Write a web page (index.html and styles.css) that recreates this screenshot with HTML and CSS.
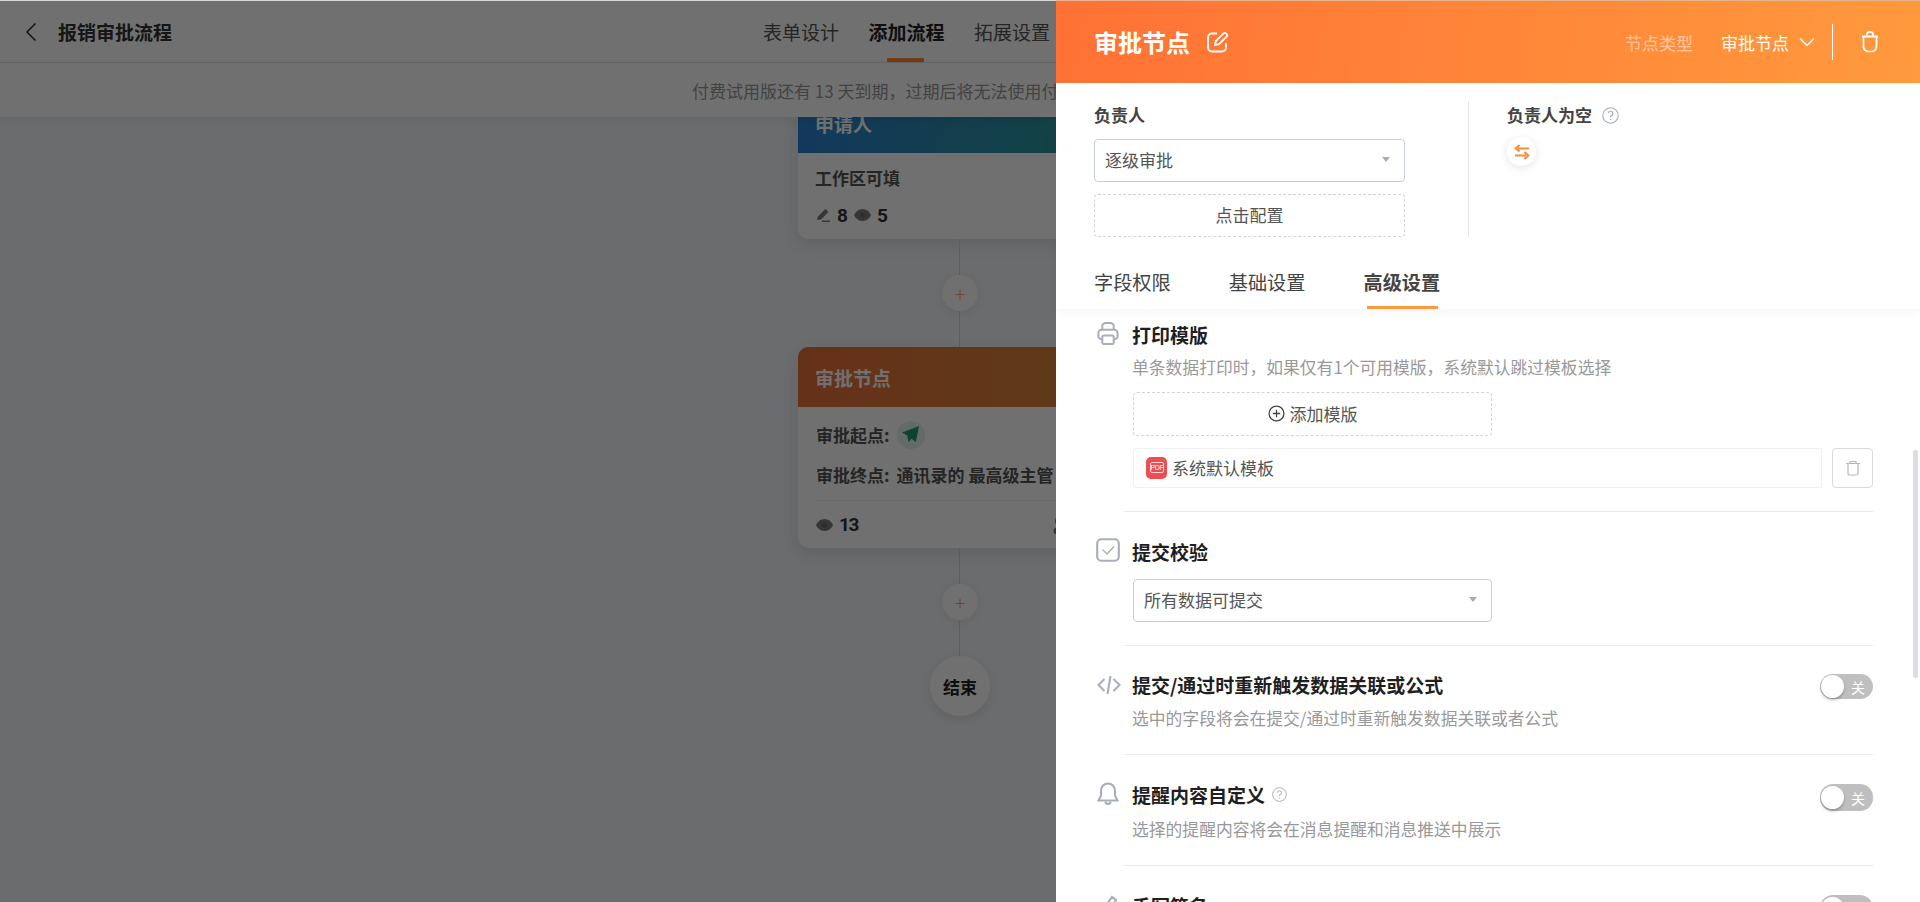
FILE: index.html
```html
<!DOCTYPE html>
<html lang="zh-CN">
<head>
<meta charset="utf-8">
<title>报销审批流程</title>
<link rel="stylesheet" href="styles.css">
</head>
<body>
<div class="page">
  <header class="topbar">
    <div class="topbar-left">
      <svg class="back" viewBox="0 0 12 20"><path d="M10.500 1.500 2 10l8.500 8.500"/></svg>
      <span class="app-title">报销审批流程</span>
    </div>
    <nav class="steps">
      <span class="step">表单设计</span>
      <span class="step step-active">添加流程</span>
      <span class="step">拓展设置</span>
    </nav>
  </header>
  <div class="notice"><span class="notice-text">付费试用版还有 13 天到期，过期后将无法使用付费功能</span></div>
  <main class="canvas">
    <section class="card card-first">
      <div class="card-head head-blue">申请人</div>
      <div class="card-body">
        <div class="card-line">工作区可填</div>
        <div class="counts">
          <svg class="mini-pen" viewBox="0 0 14 14"><path d="M.800 12 2 8.500 9.500 1l3 3L5 11.500Z" fill="#7b7c80"/><path d="M6 13.300h8" stroke="#7b7c80" stroke-width="1.400"/></svg>
          <b class="num">8</b>
          <svg class="mini-eye" viewBox="0 0 17 12"><path d="M0 6c3.500-8 13.500-8 17 0-3.500 8-13.500 8-17 0Z" fill="#7b7c80"/><circle cx="8.500" cy="6" r="2.500" fill="#66676b"/></svg>
          <b class="num">5</b>
        </div>
      </div>
    </section>
    <div class="wire"></div>
    <div class="plus">+</div>
    <div class="wire"></div>
    <section class="card">
      <div class="card-head head-orange">审批节点</div>
      <div class="card-body card-body-tall">
        <div class="card-line line-start">审批起点:
          <span class="send"><svg viewBox="0 0 16 16"><path d="M0 6 16 0l-3 15-4-3-3 3-1-6Z" fill="#1c9b6b"/></svg></span>
        </div>
        <div class="card-line line-end"><span>审批终点:</span><span>通讯录的 最高级主管</span></div>
        <div class="card-foot">
          <span class="eye"><svg class="mini-eye" viewBox="0 0 17 12"><path d="M0 6c3.500-8 13.500-8 17 0-3.500 8-13.500 8-17 0Z" fill="#7b7c80"/><circle cx="8.500" cy="6" r="2.500" fill="#66676b"/></svg><b class="num num-wide">13</b></span>
          <svg class="person" viewBox="0 0 18 18"><circle cx="7" cy="5" r="5" fill="#7b7c80"/><circle cx="4" cy="15" r="3.500" fill="#7b7c80"/></svg>
        </div>
      </div>
    </section>
    <div class="wire"></div>
    <div class="plus">+</div>
    <div class="wire"></div>
    <div class="end">结束</div>
  </main>
  <div class="mask"></div>

  <aside class="drawer">
    <div class="drawer-head">
      <div class="dh-left">
        <span class="dh-title">审批节点</span>
        <svg class="dh-edit" viewBox="0 0 22 22"><path d="M11 2.500H6A4 4 0 0 0 2 6.500v10a4 4 0 0 0 4 4h10a4 4 0 0 0 4-4V12"/><path d="m9 14 .8-4L17.500 2.300a1.600 1.600 0 0 1 2.300 0l.9.9a1.600 1.600 0 0 1 0 2.300L13 13.200Z"/></svg>
      </div>
      <div class="dh-right">
        <span class="dh-type-label">节点类型</span>
        <span class="dh-type">审批节点</span>
        <svg class="dh-chev" viewBox="0 0 16 10"><path d="m1 1.500 7 7 7-7"/></svg>
        <span class="dh-sep"></span>
        <svg class="dh-trash" viewBox="0 0 16 22"><path d="M1.500 5.500V15.500a5 5 0 0 0 5 5h3a5 5 0 0 0 5-5V5.500"/><path d="M4.800 5.500V4a3.200 3.200 0 0 1 6.400 0v1.500"/><path d="M0 5.500h16" stroke-width="2"/></svg>
      </div>
    </div>

    <div class="assign">
      <div class="assign-left">
        <div class="field-label">负责人</div>
        <div class="select"><span>逐级审批</span><i class="caret"></i></div>
        <div class="dashed">点击配置</div>
      </div>
      <div class="assign-right">
        <div class="field-label">负责人为空
          <svg class="help" viewBox="0 0 16 16"><circle cx="8" cy="8" r="7.300"/><path d="M5.800 6.200A2.200 2.200 0 1 1 8 8.400v1.300M8 11.300v1"/></svg>
        </div>
        <span class="swap">
          <svg viewBox="0 0 16 16"><path d="M15 4.500H4M5.500 1 1.800 4.500l3.700 3"/><path d="M1 11.500h11M10.500 8l3.700 3.500-3.700 3.500"/></svg>
        </span>
      </div>
    </div>

    <div class="tabs">
      <span class="tab">字段权限</span>
      <span class="tab">基础设置</span>
      <span class="tab tab-active">高级设置</span>
    </div>

    <div class="scroll">
      <section class="opt opt-print">
        <svg class="opt-icon" viewBox="0 0 22 24"><path d="M5 8V4.500A3.500 3.500 0 0 1 8.500 1h5A3.500 3.500 0 0 1 17 4.500V8"/><path d="M5 18H4.500A3.500 3.500 0 0 1 1 14.500V11.500A3.500 3.500 0 0 1 4.500 8h13a3.500 3.500 0 0 1 3.500 3.500v3a3.500 3.500 0 0 1-3.500 3.500H17"/><rect x="5" y="14" width="12" height="9" rx="2"/></svg>
        <div class="opt-main">
          <h3 class="opt-title">打印模版</h3>
          <p class="opt-desc">单条数据打印时，如果仅有1个可用模版，系统默认跳过模板选择</p>
          <div class="dashed dashed-add">
            <svg class="add-icon" viewBox="0 0 16 16"><circle cx="8" cy="8" r="7"/><path d="M8 4.500v7M4.500 8h7"/></svg>
            添加模版
          </div>
          <div class="tpl-row">
            <div class="tpl">
              <span class="pdf"><span class="pdf-inner">PDF</span></span>
              系统默认模板
            </div>
            <span class="tpl-del">
              <svg viewBox="0 0 16 16"><path d="M3 3.500h10v10a1.500 1.500 0 0 1-1.500 1.500h-7A1.500 1.500 0 0 1 3 13.500Z"/><path d="M1 3.500h14M5 3.500V1.500h6v2"/></svg>
            </span>
          </div>
        </div>
      </section>

      <section class="opt opt-check">
        <svg class="opt-icon icon-check" viewBox="0 0 24 24"><rect x="1.200" y="1.200" width="21.600" height="21.600" rx="4"/><path d="m6.500 11.500 4.500 4.500 7-7.500" stroke-width="1.400"/></svg>
        <div class="opt-main">
          <h3 class="opt-title">提交校验</h3>
          <div class="select select-wide"><span>所有数据可提交</span><i class="caret"></i></div>
        </div>
      </section>

      <section class="opt opt-code">
        <svg class="opt-icon icon-code" viewBox="0 0 24 20"><path d="M7.500 4 1.500 10l6 6M16.500 4l6 6-6 6M13.500 1l-3 18"/></svg>
        <div class="opt-main">
          <h3 class="opt-title">提交/通过时重新触发数据关联或公式</h3>
          <p class="opt-desc">选中的字段将会在提交/通过时重新触发数据关联或者公式</p>
        </div>
        <span class="switch"><i class="knob"></i><span class="switch-text">关</span></span>
      </section>

      <section class="opt opt-bell">
        <svg class="opt-icon icon-bell" viewBox="0 0 22 24"><path d="M11 1.500a7 7 0 0 0-7 7v5l-2.500 5h19L18 13.500v-5a7 7 0 0 0-7-7Z"/><path d="M8.500 19.500a2.500 2.500 0 0 0 5 0" /></svg>
        <div class="opt-main">
          <h3 class="opt-title">提醒内容自定义
            <svg class="help help-sm" viewBox="0 0 16 16"><circle cx="8" cy="8" r="7.300"/><path d="M5.800 6.200A2.200 2.200 0 1 1 8 8.400v1.300M8 11.300v1"/></svg>
          </h3>
          <p class="opt-desc">选择的提醒内容将会在消息提醒和消息推送中展示</p>
        </div>
        <span class="switch switch-tall"><i class="knob"></i><span class="switch-text">关</span></span>
      </section>

      <section class="opt opt-sign">
        <svg class="opt-icon icon-pen" viewBox="0 0 22 24"><path d="M5 17 15 3l4 3L9 20l-5 2Z"/></svg>
        <div class="opt-main">
          <h3 class="opt-title">手写签名</h3>
        </div>
        <span class="switch switch-tall"><i class="knob"></i><span class="switch-text">关</span></span>
      </section>
    </div>
    <div class="scrollbar"></div>
  </aside>
</div>
</body>
</html>
```

FILE: styles.css
```css
* { box-sizing: border-box; }
html, body { margin: 0; padding: 0; height: 100%; overflow: hidden; }
body { font-family: "Noto Sans CJK SC", "Noto Sans", sans-serif; color: #333; }
svg { display: block; flex: none; }

.page { position: relative; width: 1920px; height: 902px; overflow: hidden; background: #f3f5f9; display: flex; flex-direction: column; }

/* top bar */
.topbar { height: 63px; flex: none; background: #fff; border-top: 1px solid #d8d8d8; border-bottom: 1px solid #e4e4e4; display: flex; align-items: center; position: relative; z-index: 3; }
.topbar-left { display: flex; align-items: center; padding-left: 25px; gap: 21px; }
.back { width: 12px; height: 20px; fill: none; stroke: #333; stroke-width: 1.600; }
.app-title { font-size: 19px; font-weight: 700; color: #333; line-height: 26px; }
.steps { position: absolute; left: 763px; top: 0; height: 61px; display: flex; gap: 29.500px; }
.step { font-size: 19px; line-height: 61px; color: #555; position: relative; }
.step-active { color: #222; font-weight: 700; }
.step-active::after { content: ""; position: absolute; left: 18px; right: 21px; bottom: 0; height: 4px; background: #ff8a34; border-radius: 1px; }

.notice { height: 54px; flex: none; background: #fff; position: relative; z-index: 3; box-shadow: 0 4px 12px rgba(0,0,0,.06); display: flex; align-items: center; padding: 1px 0 0 692px; font-size: 17px; color: #999; white-space: nowrap; }

/* canvas */
.canvas { flex: 1; display: flex; flex-direction: column; align-items: center; min-height: 0; }
.card { width: 324px; flex: none; border-radius: 10px; background: #fff; box-shadow: 0 6px 16px rgba(0,0,0,.1); overflow: hidden; }
.card-first { margin-top: -30px; }
.card-head { font-size: 19px; font-weight: 700; color: #fff; padding-left: 17px; display: flex; align-items: center; }
.head-blue { height: 66px; padding-top: 7px; background: linear-gradient(90deg, #2a82d2, #2a9a8e); }
.head-orange { height: 60px; background: linear-gradient(90deg, #e8703a, #d8883a); }
.card-body { height: 86px; padding: 13px 19px 0 17px; }
.card-line { font-size: 17px; font-weight: 700; color: #555; line-height: 24px; display: flex; align-items: center; }
.counts { display: flex; align-items: center; margin-top: 13px; height: 24px; margin-left: 1px; }
.num { font-family: "Roboto", "Noto Sans", sans-serif; font-size: 19px; font-weight: 700; color: #333; }
.num-wide { letter-spacing: -1.500px; }
.mini-pen { width: 14px; height: 14px; margin-right: 7px; }
.counts .num { margin-right: 6px; }
.mini-eye { width: 17px; height: 12px; }
.counts .mini-eye { margin-right: 6px; }
.card-body-tall { height: 141px; padding-left: 18px; }
.line-start { height: 29px; gap: 7px; }
.send { width: 28px; height: 28px; border-radius: 50%; background: #dff3ea; display: flex; align-items: center; justify-content: center; }
.send svg { width: 17px; height: 17px; }
.line-end { margin-top: 11px; height: 29px; gap: 7px; white-space: nowrap; }
.card-foot { border-top: 1px solid #f0f0f0; margin-top: 11px; padding-top: 12px; display: flex; align-items: center; justify-content: space-between; }
.eye { display: flex; align-items: center; gap: 6px; }
.person { width: 18px; height: 18px; margin-right: 32px; }
.wire { width: 1px; height: 36px; background: #d4d4d4; flex: none; margin-left: -1px; }
.plus { width: 36px; height: 36px; flex: none; border-radius: 50%; background: #fff; box-shadow: 0 2px 8px rgba(0,0,0,.08); color: #ffa45a; font-size: 20px; font-weight: 300; line-height: 38px; text-align: center; }
.end { width: 60px; height: 60px; flex: none; border-radius: 50%; background: #fff; box-shadow: 0 3px 10px rgba(0,0,0,.1); font-size: 17px; font-weight: 700; color: #222; display: flex; align-items: center; justify-content: center; }

.mask { position: absolute; inset: 1px 0 0 0; z-index: 5; background: rgba(0,0,0,.56); }

/* drawer */
.drawer { position: absolute; top: 0; right: 0; bottom: 0; width: 864px; background: #fff; z-index: 6; display: flex; flex-direction: column; }
.drawer-head { height: 83px; flex: none; background: linear-gradient(100deg, #ff7135, #ff9a3d); border-top: 1px solid #e8b48c; padding: 0 42px 0 38px; display: flex; align-items: center; justify-content: space-between; color: #fff; }
.dh-left { display: flex; align-items: center; gap: 16px; }
.dh-title { font-size: 24px; font-weight: 700; line-height: 32px; }
.dh-edit { width: 22px; height: 22px; fill: none; stroke: #fff; stroke-width: 1.800; }
.dh-right { display: flex; align-items: center; font-size: 17px; }
.dh-type-label { opacity: .5; margin-right: 28px; }
.dh-chev { width: 16px; height: 10px; margin-left: 10px; fill: none; stroke: #fff; stroke-width: 1.500; }
.dh-sep { width: 1px; height: 36px; background: #fff; margin: 0 29px 0 17px; }
.dh-trash { width: 16px; height: 22px; fill: none; stroke: #fff; stroke-width: 1.700; }

.assign { height: 155px; flex: none; display: flex; padding-top: 18px; }
.assign-left { width: 413px; padding-left: 38px; padding-right: 63px; border-right: 1px solid #e8e8e8; height: 136px; }
.field-label { font-size: 17px; font-weight: 700; color: #444; line-height: 24px; margin-top: 2px; display: flex; align-items: center; gap: 10px; }
.select { height: 43px; margin-top: 12px; border: 1px solid #c8ced6; border-radius: 4px; display: flex; align-items: center; justify-content: space-between; padding: 0 14px 2px 10px; font-size: 17px; color: #555; }
.caret { width: 0; height: 0; border-left: 4px solid transparent; border-right: 4px solid transparent; border-top: 5px solid #a8adb5; }
.dashed { height: 43px; margin-top: 12px; border: 1px dashed #d2d4d8; border-radius: 4px; display: flex; align-items: center; justify-content: center; gap: 5px; padding-bottom: 2px; font-size: 17px; color: #555; }
.assign-right { padding-left: 38px; }
.help { width: 17px; height: 17px; fill: none; stroke: #a6acb5; stroke-width: 1; }
.help-sm { width: 15px; height: 15px; margin-left: 7px; }
.swap { width: 29px; height: 29px; margin-top: 10px; border-radius: 50%; background: #fff; box-shadow: 0 2px 10px rgba(0,0,0,.1); display: flex; align-items: center; justify-content: center; }
.swap svg { width: 16px; height: 16px; fill: none; stroke: #f58f3e; stroke-width: 2.200; }

.tabs { height: 71px; flex: none; display: flex; gap: 58px; padding-left: 38px; position: relative; z-index: 2; box-shadow: 0 4px 8px rgba(0,0,0,.03); background: #fff; }
.tab { font-size: 19.200px; color: #444; line-height: 27px; position: relative; height: 71px; padding-top: 31px; }
.tab-active { font-weight: 700; }
.tab-active::after { content: ""; position: absolute; left: 3px; right: 2px; bottom: 0; height: 3px; background: #ff9a3c; }

.scroll { flex: 1; min-height: 0; overflow: hidden; padding-left: 68px; padding-right: 47px; }
.opt { position: relative; display: flex; border-bottom: 1px solid #e9eaec; padding-left: 9px; }
.opt-main { flex: 1; min-width: 0; }
.opt-icon { position: absolute; left: -27px; fill: none; stroke: #a9aeb8; stroke-width: 2.100; }
.opt-title { margin: 0 0 0 -1px; font-size: 19px; font-weight: 700; color: #1f1f1f; line-height: 27px; display: flex; align-items: center; }
.opt-desc { margin: 0 0 0 -1px; font-size: 16.800px; color: #999; line-height: 24px; white-space: nowrap; }

.opt-print { height: 203px; padding-top: 12px; }
.opt-print .opt-icon { top: 13px; width: 22px; height: 23px; }
.opt-print .opt-desc { margin-top: 7px; }
.dashed-add { width: 359px; height: 44px; margin-top: 13px; }
.add-icon { width: 17px; height: 17px; fill: none; stroke: #444; stroke-width: 1.200; }
.tpl-row { display: flex; gap: 10px; margin-top: 12px; }
.tpl { flex: 1; height: 40px; border: 1px solid #f1f1f3; border-radius: 2px; display: flex; align-items: center; padding: 0 0 1px 12px; gap: 5px; font-size: 17px; color: #555; }
.pdf { width: 21px; height: 22px; border-radius: 5px; background: #ee4d54; display: flex; align-items: center; justify-content: center; }
.pdf-inner { width: 14px; height: 11px; border: 1px solid #ffd9da; border-radius: 2px; font-size: 7px; font-family: "Liberation Sans", sans-serif; line-height: 9px; text-align: center; color: #fff; letter-spacing: -.3px; }
.tpl-del { width: 41px; height: 40px; border: 1px solid #d8dadd; border-radius: 4px; display: flex; align-items: center; justify-content: center; }
.tpl-del svg { width: 16px; height: 16px; fill: none; stroke: #b4b9c2; stroke-width: 1.200; }

.opt-check { height: 134px; padding-top: 26px; }
.opt-check .opt-icon { top: 26px; left: -28px; width: 24px; height: 24px; }
.select-wide { width: 359px; margin-top: 14px; }

.opt-code { height: 109px; padding-top: 25px; }
.opt-code .opt-icon { top: 29px; width: 24px; height: 20px; }
.opt-code .opt-desc { margin-top: 8px; }

.opt-bell { height: 111px; padding-top: 26px; }
.opt-bell .opt-icon { top: 27px; width: 22px; height: 24px; }
.opt-bell .opt-desc { margin-top: 9px; }

.opt-sign { height: 100px; padding-top: 26px; border-bottom: 0; }
.opt-sign .opt-icon { top: 28px; width: 22px; height: 24px; }

.switch { position: absolute; right: 0; width: 53px; height: 25px; border-radius: 13px; background: #bfbfbf; display: flex; align-items: center; justify-content: flex-end; padding-right: 8px; }
.switch-tall { height: 27px; }
.opt-code .switch { top: 28px; }
.opt-bell .switch { top: 29px; }
.opt-sign .switch { top: 29px; }
.knob { position: absolute; left: 1px; top: 1px; width: 23px; height: 23px; border-radius: 50%; background: #fff; box-shadow: 0 2px 3px rgba(0,0,0,.25); }
.switch-tall .knob { top: 2px; }
.switch-text { font-size: 14px; color: #fff; line-height: 1; }

.scrollbar { position: absolute; right: 2px; top: 450px; width: 5px; height: 228px; border-radius: 3px; background: #dcdde0; }
```
